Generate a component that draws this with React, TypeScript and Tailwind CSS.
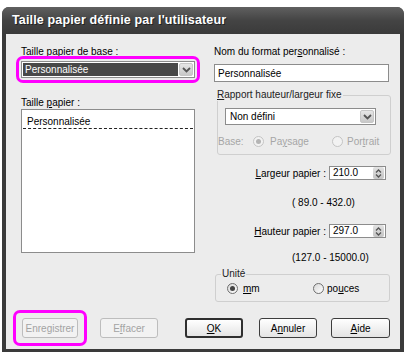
import React from "react";

const U = ({ children }: { children: React.ReactNode }) => <span className="underline underline-offset-[1px]">{children}</span>;

function Chevron() {
  return (
    <svg width="9" height="6" viewBox="0 0 9 6">
      <path d="M1 1 L4.5 4.5 L8 1" fill="none" stroke="#555" strokeWidth="1.8" />
    </svg>
  );
}

function ComboButton() {
  return (
    <div className="flex w-[14px] items-center justify-center self-stretch rounded-[2px] border border-[#c6c6c6] bg-gradient-to-b from-[#e6e6e6] to-[#c8c8c8]">
      <Chevron />
    </div>
  );
}

function Spinner({ value }: { value: string }) {
  return (
    <div className="flex h-[14px] w-[57px] items-center border border-[#8c8c8c] bg-white pl-[3px] pr-[1px]">
      <span className="flex-1 leading-[12px]">{value}</span>
      <div className="flex h-[12px] w-[11px] flex-col items-center justify-center gap-[1px] rounded-[2px] bg-gradient-to-b from-[#e2e2e2] to-[#c4c4c4]">
        <svg width="7" height="4" viewBox="0 0 7 4"><path d="M1 3.5 L3.5 1 L6 3.5" fill="none" stroke="#555" strokeWidth="1.3" /></svg>
        <svg width="7" height="4" viewBox="0 0 7 4"><path d="M1 0.5 L3.5 3 L6 0.5" fill="none" stroke="#555" strokeWidth="1.3" /></svg>
      </div>
    </div>
  );
}

function Radio({ checked, disabled }: { checked?: boolean; disabled?: boolean }) {
  return (
    <span
      className={`flex h-[11px] w-[11px] items-center justify-center rounded-full border ${
        disabled ? "border-[#c4c4c4] bg-[#f2f2f2]" : "border-[#6f6f6f] bg-gradient-to-br from-[#d8d8d8] to-white"
      }`}
    >
      {checked && <span className={`h-[5px] w-[5px] rounded-full ${disabled ? "bg-[#b4b4b4]" : "bg-[#444]"}`} />}
    </span>
  );
}

function Btn({ children, w, disabled, def }: { children: React.ReactNode; w: string; disabled?: boolean; def?: boolean }) {
  return (
    <div
      className={`flex h-[20px] ${w} items-center justify-center rounded-[3px] ${
        disabled
          ? "border border-[#bdbdbd] bg-[#f2f2f2] text-[#a3a3a3]"
          : def
          ? "border-2 border-[#2f2f2f] bg-gradient-to-b from-white to-[#e4e4e4] text-black"
          : "border border-[#3d3d3d] bg-gradient-to-b from-white to-[#e4e4e4] text-black"
      }`}
    >
      {children}
    </div>
  );
}

export default function App() {
  return (
    <div className="h-[353px] w-[406px] bg-white pl-[2px] pt-[7px] font-['Liberation_Sans',Arial,sans-serif] text-[10px] leading-[13px] text-black">
      <div className="flex h-[345px] w-[402px] flex-col overflow-hidden rounded-t-[7px] bg-[#3a3a3a]">
        {/* title bar */}
        <div className="flex h-[27px] items-center bg-gradient-to-b from-[#606060] via-[#444] to-[#3a3a3a] pl-[10px] pb-[1px]">
          <span className="text-[12.5px] font-bold tracking-[0.15px] text-white [text-shadow:1px_1px_0_#222]">
            Taille papier définie par l'utilisateur
          </span>
        </div>

        {/* body */}
        <div className="mx-[4px] mb-[3px] flex flex-1 flex-col bg-[#ececec] pl-[15px] pr-[9px]">
          <div className="flex gap-[19px]">
            {/* left column */}
            <div className="flex w-[174px] flex-col">
              <div className="mt-[11px]">Taille papier de <U>b</U>ase :</div>
              <div className="-mx-[5px] -mt-[2px] rounded-[7px] border-[3px] border-[#ff00ff] p-[2px]">
                <div className="flex h-[17px] items-center border border-[#8c8c8c] bg-white p-[1px]">
                  <div className="flex flex-1 items-center self-stretch bg-[#484848] pl-[2px] text-white">Personnalisée</div>
                  <div className="ml-[1px] flex self-stretch"><ComboButton /></div>
                </div>
              </div>
              <div className="mt-[13px]">Taille <U>p</U>apier :</div>
              <div className="h-[144px] border border-[#8c8c8c] bg-white p-[1px]">
                <div className="border-b border-dashed border-[#222] pl-[4px] pt-[4px]">Personnalisée</div>
              </div>
            </div>

            {/* right column */}
            <div className="flex w-[177px] flex-col">
              <div className="mt-[11px]">Nom du format per<U>s</U>onnalisé :</div>
              <div className="mt-[6px] flex h-[18px] w-[175px] items-center border border-[#8c8c8c] bg-white pl-[3px]">Personnalisée</div>

              <div className="relative mt-[13px] ml-[3px] h-[60px] rounded-[3px] border border-[#cfcfcf]">
                <span className="absolute -top-[8px] left-[-2px] bg-[#ececec] px-[1px] text-[#222]"><U>R</U>apport hauteur/largeur fixe</span>
                <div className="ml-[7px] mt-[12px] flex h-[17px] w-[151px] items-center border border-[#8c8c8c] bg-white p-[1px]">
                  <span className="flex-1 pl-[3px]">Non défini</span>
                  <div className="flex self-stretch"><ComboButton /></div>
                </div>
                <div className="mt-[10px] flex items-center text-[#a6a6a6]">
                  <span className="w-[35px]">Base:</span>
                  <Radio checked disabled />
                  <span className="ml-[6px] w-[62px]">Pa<U>y</U>sage</span>
                  <Radio disabled />
                  <span className="ml-[4px]">Por<U>t</U>rait</span>
                </div>
              </div>

              <div className="mt-[11px] flex items-center justify-end gap-[3px] pr-[5px]">
                <span><U>L</U>argeur papier :</span>
                <Spinner value="210.0" />
              </div>
              <div className="mt-[16px] pl-[78px]">( 89.0 - 432.0)</div>

              <div className="mt-[15px] flex items-center justify-end gap-[3px] pr-[5px]">
                <span><U>H</U>auteur papier :</span>
                <Spinner value="297.0" />
              </div>
              <div className="mt-[13px] pl-[78px]">(127.0 - 15000.0)</div>

              <div className="relative mt-[10px] ml-[1px] h-[28px] w-[175px] rounded-[3px] border border-[#cfcfcf]">
                <span className="absolute -top-[8px] left-[5px] bg-[#ececec] px-[1px] text-[#222]">Unité</span>
                <div className="mt-[7px] flex items-center">
                  <span className="ml-[11px]"><Radio checked /></span>
                  <span className="ml-[5px] w-[70px]"><U>m</U>m</span>
                  <Radio />
                  <span className="ml-[3px]">po<U>u</U>ces</span>
                </div>
              </div>
            </div>
          </div>

          {/* buttons */}
          <div className="mt-[8px] flex items-center">
            <div className="-ml-[8px] rounded-[7px] border-[3px] border-[#ff00ff] px-[6px] py-[5px]">
              <Btn w="w-[56px]" disabled>Enregistrer</Btn>
            </div>
            <div className="ml-[13px]"><Btn w="w-[58px]" disabled>E<U>f</U>facer</Btn></div>
            <div className="ml-[27px]"><Btn w="w-[58px]" def><U>O</U>K</Btn></div>
            <div className="ml-[16px]"><Btn w="w-[58px]">A<U>n</U>nuler</Btn></div>
            <div className="ml-[14px]"><Btn w="w-[59px]"><U>A</U>ide</Btn></div>
          </div>
        </div>
      </div>
    </div>
  );
}
